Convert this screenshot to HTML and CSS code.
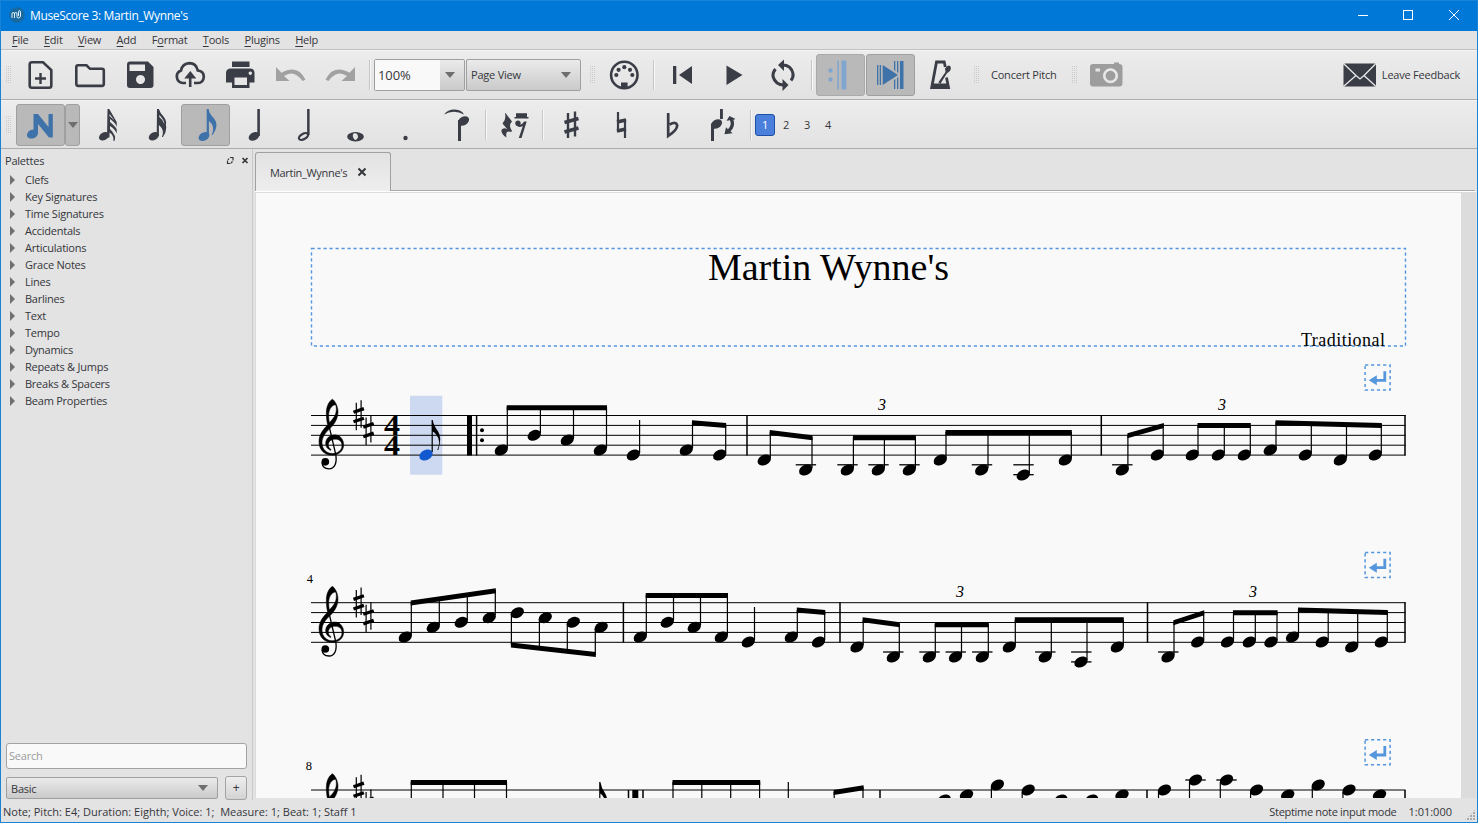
FILE: index.html
```html
<!DOCTYPE html>
<html lang="en">
<head>
<meta charset="utf-8">
<title>MuseScore 3: Martin_Wynne's</title>
<link rel="stylesheet" href="styles.css">
</head>
<body>
<div class="window">
<header class="titlebar">
<svg class="logo" width="16" height="16" viewBox="0 0 16 16"><circle cx="8" cy="8" r="7.700" fill="#17699f"/><path d="M3 11V7Q3 5.500 4.200 5.500T5.500 7V11M5.500 7Q5.500 5.500 6.800 5.500T8 7V9.500Q8 11 9.500 11T11.500 9V6Q11.500 3.500 10.500 3.500T9.500 6V9" fill="none" stroke="#fff" stroke-width=".9"/></svg>
<span class="caption">MuseScore 3: Martin_Wynne's</span>
<svg class="winbuttons" width="116" height="30" viewBox="1350 0 116 30" fill="none" stroke="#fff"><path d="M1358 15.500h10"/><rect x="1403.500" y="10.500" width="9" height="9"/><path d="M1449 10l10 10M1459 10l-10 10"/></svg>
</header>
<nav class="menubar"><span><u>F</u>ile</span><span><u>E</u>dit</span><span><u>V</u>iew</span><span><u>A</u>dd</span><span>F<u>o</u>rmat</span><span><u>T</u>ools</span><span><u>P</u>lugins</span><span><u>H</u>elp</span></nav>

<div class="toolbar">
<i class="grip first"></i>
<span class="btn"><svg width="32" height="32" viewBox="0 0 32 32"><path d="M8 3.200h11L27.300 11v15.500q0 2.200-2.200 2.200H8q-2.300 0-2.300-2.200V5.500Q5.700 3.200 8 3.200Z" fill="none" stroke="#3b3d46" stroke-width="2.600"/><path d="M16.500 14v11M11 19.500h11" stroke="#3b3d46" stroke-width="2.400"/></svg></span>
<span class="btn"><svg width="32" height="32" viewBox="0 0 32 32"><path d="M4 6.300h8.500l3.500 3.500h12q1.800 0 1.800 1.800v13.500q0 1.800-1.800 1.800H4.200q-1.900 0-1.900-1.800V8.200q0-1.900 1.700-1.900Z" fill="none" stroke="#3b3d46" stroke-width="2.600"/></svg></span>
<span class="btn"><svg width="32" height="32" viewBox="0 0 32 32"><path fill="#3b3d46" fill-rule="evenodd" d="M6 2.500h18l5.500 5.500v18q0 3-3 3H6q-3 0-3-3v-20.500q0-3 3-3ZM5.500 5.500v6.500h15.500V5.500ZM16.500 16a4.500 4.500 0 1 0 .01 0Z"/></svg></span>
<span class="btn"><svg width="32" height="32" viewBox="0 0 32 32"><path d="M12 24H8.500A6.500 6.500 0 0 1 7 11.500Q8.500 4.500 15.500 4.200Q22 4.200 23.800 11.500Q29.800 12 29.800 18Q29.300 24 24 24H20" fill="none" stroke="#3b3d46" stroke-width="2.700"/><path d="M16.300 12l6 7.500h-4.800V28h-2.600v-8.500h-4.700Z" fill="#3b3d46"/></svg></span>
<span class="btn"><svg width="32" height="32" viewBox="0 0 32 32"><path fill="#3b3d46" fill-rule="evenodd" d="M8 2.500h17.500v5.500H8ZM7 9.500h19q4.500 0 4.500 4.500v9.500h-5V29H8v-5.500H2V14q0-4.500 5-4.500ZM10.500 18.500V26H23v-7.500ZM26.300 12.500a1.700 1.700 0 1 0 .01 0Z"/></svg></span>
<span class="btn"><svg width="32" height="32" viewBox="0 0 32 32"><path d="M2 8v14h13.500L10 17Q20 10 28.500 22l3-1.200Q24 4.500 7.500 13.700Z" fill="#a1a1a1"/></svg></span>
<span class="btn"><svg width="32" height="32" viewBox="0 0 32 32"><path d="M31 8v14H17.500L23 17Q13 10 4.500 22l-3-1.200Q9 4.500 25.500 13.700Z" fill="#a1a1a1"/></svg></span>
<i class="sep w9"></i>
<div class="combo zoom"><span class="field">100%</span><i class="arrow"></i></div>
<div class="combo view"><span class="label">Page View</span><i class="arrow"></i></div>
<i class="grip midi"></i>
<span class="btn"><svg width="32" height="32" viewBox="0 0 32 32"><circle cx="16.300" cy="16" r="13.200" fill="none" stroke="#3b3d46" stroke-width="2.600"/><g fill="#3b3d46"><circle cx="8.300" cy="16" r="2.100"/><circle cx="10.600" cy="10.800" r="2.100"/><circle cx="16.300" cy="8.200" r="2.100"/><circle cx="22" cy="10.800" r="2.100"/><circle cx="24.300" cy="16" r="2.100"/><path d="M13 23.500h6.600V29H13Z"/></g></svg></span>
<i class="sep w9"></i>
<span class="btn"><svg width="32" height="32" viewBox="0 0 32 32"><path d="M6 7h3.300v18H6ZM25 7v18L12 16Z" fill="#3b3d46"/></svg></span>
<span class="btn"><svg width="32" height="32" viewBox="0 0 32 32"><path d="M9.500 6.500L25.500 16L9.500 26Z" fill="#3b3d46"/></svg></span>
<span class="btn"><svg width="32" height="32" viewBox="0 0 32 32"><g fill="none" stroke="#3b3d46" stroke-width="3"><path d="M15.500 6Q24 6 26 14.500Q26.500 18.500 24 21.500"/><path d="M17 26Q8.500 26 6 17.500Q5.500 13.500 8.500 10"/></g><path d="M17 .5V12l-6-6ZM15.500 20v12l6-6Z" fill="#3b3d46"/></svg></span>
<i class="sep w8"></i>
<span class="toggle faded"><svg width="32" height="32" viewBox="0 0 32 32" fill="#80a6cf"><circle cx="5.500" cy="11.500" r="2.200"/><circle cx="5.500" cy="20.500" r="2.200"/><path d="M12.300 1.500h1.500v29h-1.500ZM16.500 1.500h4.800v29h-4.800Z"/></svg></span>
<span class="toggle second"><svg width="32" height="32" viewBox="0 0 32 32" fill="#4072aa"><path d="M2 6h1.300v20H2ZM4.700 6H6v20H4.700ZM7.700 6L23 16 7.700 26ZM19 2h1.300v10L19 11ZM22 2h1.300v12L22 13ZM25 2h3.500v28H25ZM19 21l1.300-1v10H19ZM22 19l1.300-1v12H22Z"/></svg></span>
<span class="btn"><svg width="32" height="32" viewBox="0 0 32 32"><path fill="none" stroke="#3b3d46" stroke-width="2.800" d="M21.300 8L20.200 3H12.500L7.700 28.500H24.500L22.500 18.500"/><path fill="#3b3d46" d="M7 24.500h17.500v5H7ZM14.300 23.500L21.500 13l-.5-3.500Q24.500 5 26.500 7.500q1.500 4-3.500 6.700L16.500 24.500Z"/></svg></span>
<i class="grip cp"></i>
<span class="label concert">Concert Pitch</span>
<i class="grip cam"></i>
<span class="btn"><svg width="34" height="32" viewBox="0 0 34 32"><path fill="#9d9d9d" fill-rule="evenodd" d="M4 5h21v-1.500h5V5q3.500 0 3.500 3v16q0 3.500-3 3.500H4q-3 0-3-3V8q0-3 3-3ZM6.500 9.500v3H11v-3ZM21.500 9.200a7.500 7.500 0 1 0 .01 0ZM21.500 11.800a4.900 4.900 0 1 1-.01 0Z"/></svg></span>
<span class="feedback"><svg width="34" height="24" viewBox="0 0 34 24"><rect x=".5" y=".5" width="32.500" height="23" rx="1.500" fill="#3b3d46"/><path d="M1 1l12 11.500 4 3.500 4-3.500L32.500 1M1 23l12-10.500M32.500 23L21 12.500" fill="none" stroke="#e9e9e9" stroke-width="1.300"/></svg><span class="label">Leave Feedback</span></span>
</div>

<div class="toolbar notes">
<i class="grip second-row"></i>
<span class="toggle"><svg width="32" height="36" viewBox="0 0 32 36" fill="#4072aa"><ellipse cx="7.500" cy="27" rx="5.800" ry="4.300" transform="rotate(-25 7.500 27)"/><path d="M8.500 7H13L23.500 20V7h4.300v23.500H24L13 17v10H8.500Z"/></svg></span>
<span class="toggle drop"><i class="arrow"></i></span>
<span class="btn first-note"><svg width="32" height="36" viewBox="-.5 0 32 36" fill="#3b3d46"><ellipse cx="11.500" cy="29.300" rx="5.400" ry="3.800" transform="rotate(-30 11.500 29.300)"/><path d="M15 2h1.700l7.500 13v5q-1-4-6.700-8v3q6 5 6.700 7.500v4q-2-5-6.700-7.500v3q7 7 4.500 12h-1q.5-6-4-8.500v5h-2.500ZM17 7v2l5 4.500Z"/></svg></span>
<span class="btn w48"><svg width="32" height="36" viewBox="-.5 0 32 36" fill="#3b3d46"><ellipse cx="12.300" cy="29.300" rx="5.400" ry="3.800" transform="rotate(-30 12.300 29.300)"/><path d="M15.500 2h1.900q1 4 5 8 3 4 2 8 .8 2 0 5 0 3-3 7h-1q3-7-3-12v11h-2.200ZM17.800 10q4 3 5 7 0-4-5-9Z"/></svg></span>
<span class="toggle"><svg width="32" height="36" viewBox="0 0 32 36" fill="#4072aa"><ellipse cx="14" cy="29.500" rx="5.800" ry="4" transform="rotate(-30 14 29.500)"/><path d="M16.700 2h2q0 4 5 9 6 7-1 17h-1q4-9-2.800-14V29h-2.200Z"/></svg></span>
<span class="btn"><svg width="32" height="36" viewBox="-.5 0 32 36" fill="#3b3d46"><ellipse cx="14.500" cy="29.300" rx="5.700" ry="3.900" transform="rotate(-30 14.500 29.300)"/><path d="M17.800 2h2.600V29h-2.600Z"/></svg></span>
<span class="btn"><svg width="32" height="36" viewBox="-.5 0 32 36"><ellipse cx="14" cy="29.500" rx="5" ry="2.700" transform="rotate(-30 14 29.500)" fill="none" stroke="#3b3d46" stroke-width="2.300"/><path d="M17.600 2h2.500V28h-2.500Z" fill="#3b3d46"/></svg></span>
<span class="btn"><svg width="32" height="36" viewBox="0 0 32 36"><path fill="#3b3d46" fill-rule="evenodd" d="M16.500 25a8.300 4.700 0 1 0 .01 0ZM15 26.300q4-1 4 4.200-2 4-4 1.500-2.500-3.700 0-5.700Z"/></svg></span>
<span class="btn"><svg width="32" height="36" viewBox="0 0 32 36"><circle cx="16.500" cy="31" r="2.200" fill="#3b3d46"/></svg></span>
<span class="btn tie"><svg width="32" height="36" viewBox="0 0 32 36" fill="#3b3d46"><path d="M3 7.500Q7 2.200 14 2.500T23 7.500Q18 4.700 13 4.700T3 7.500ZM17 13h3v21h-3Z"/><ellipse cx="22.500" cy="14" rx="6" ry="4.200" transform="rotate(-30 22.500 14)"/></svg></span>
<i class="sep w7"></i>
<span class="btn"><svg width="32" height="36" viewBox="0 0 32 36" fill="#3b3d46"><path d="M7.500 6l6.500 8.500q-4 4 0 9.500l-1 1q-6-2-4.500 5.500-5.500-3.500-5-7.500 2-3 6-.5L4.500 16.500q4-4 2.500-10ZM18 6.200h11v3.800h1.500v1.500H16.500V10H18Z"/><circle cx="20" cy="16.300" r="2.700"/><path d="M18.500 17.500q5 1.500 7.500-3h2.700L23.500 31h-2.700l4-12q-4 2-6.300-.5Z"/></svg></span>
<i class="sep w7"></i>
<span class="btn"><svg width="32" height="36" viewBox="0 0 32 36"><path d="M13 6v25M20 4.500v25" stroke="#3b3d46" stroke-width="2.400"/><path d="M9.500 15.500l14-4M9.500 25l14-4" stroke="#3b3d46" stroke-width="3.800"/></svg></span>
<span class="btn"><svg width="32" height="36" viewBox="0 0 32 36"><path d="M13 5v20M20 12v19" stroke="#3b3d46" stroke-width="2.200"/><path d="M12 15l9-2M12 24l9-2" stroke="#3b3d46" stroke-width="3.800"/></svg></span>
<span class="btn w51"><svg width="32" height="36" viewBox="0 0 32 36"><path d="M12.200 6v23q9-6 9-10.500-1-4.500-7.500-1" fill="none" stroke="#3b3d46" stroke-width="2.700"/></svg></span>
<span class="btn"><svg width="32" height="36" viewBox="-.5 0 32 36" fill="#3b3d46"><ellipse cx="10" cy="17" rx="6" ry="4.200" transform="rotate(-30 10 17)"/><path d="M4.500 17h3v17h-3ZM13.500 2h2.900v10h-2.900ZM23 9l6 3-2 .8q2 7-3 11.500l2 2-8 1 1.500-7 2 2q4-4 2-9l-3.500.5Z"/></svg></span>
<i class="sep w8"></i>
<span class="voice on">1</span><span class="voice">2</span><span class="voice">3</span><span class="voice">4</span>
</div>

<main class="workspace">
<aside class="palettes">
<div class="dockhead"><span>Palettes</span><svg width="26" height="12" viewBox="0 0 26 12" fill="none" stroke="#35363b"><path d="M6 2.500H9V5.500M3.500 5.500V8.500H6.500M5 3.500L4 5M7 8L8.500 6.500" stroke-width="1.200"/><path d="M18.500 3l5 5M23.500 3l-5 5" stroke-width="1.700"/></svg></div>
<ul class="tree"><li>Clefs</li><li>Key Signatures</li><li>Time Signatures</li><li>Accidentals</li><li>Articulations</li><li>Grace Notes</li><li>Lines</li><li>Barlines</li><li>Text</li><li>Tempo</li><li>Dynamics</li><li>Repeats &amp; Jumps</li><li>Breaks &amp; Spacers</li><li>Beam Properties</li></ul>
<div class="search">Search</div>
<div class="workspace-row"><div class="combo basic"><span>Basic</span><i class="arrow"></i></div><span class="plus">+</span></div>
</aside>
<section class="document">
<div class="tabs"><div class="tab"><span>Martin_Wynne's</span><svg width="10" height="10" viewBox="0 0 10 10"><path d="M1.500 1.500l7 7M8.500 1.500l-7 7" stroke="#35363b" stroke-width="2"/></svg></div></div>
<div class="canvas">
<svg class="score" width="1205" height="605" viewBox="256 193 1205 605">
<defs>
<ellipse id="n" rx="7" ry="5" transform="rotate(-27)"/>
<g id="l"><path d="M-10.200 0H10.200" stroke="#000" stroke-width="1.300"/></g>
<g id="sharp"><path d="M-2.400-12.500V15M2.400-15V12.500" fill="none" stroke="#000" stroke-width="1.200"/><path d="M-5.200-3L5.200-6.600M-5.200 6.600L5.200 3" fill="none" stroke="#000" stroke-width="3.300"/></g>
<g id="clef" transform="scale(.33333) translate(-33 -106)"><path stroke="#000" stroke-width="1.500" fill-rule="evenodd" d="M97 57C106 62 114 80 114 94C114 116 104 130 92 143C76 158 66 170 66 188C66 208 80 220 97 220C114 220 126 210 126 196C126 182 116 177 105 177C94 177 85 184 85 194C85 201 88 205 93 208C94 209 93 211 91 210C82 206 77 199 77 190C77 176 89 164 104 164C121 164 131 179 131 194C131 213 116 225 97 225C73 225 57 209 57 184C57 162 70 148 83 134C80 124 79 110 79 98C79 80 86 64 97 57ZM105 74C94 76 86 90 86 106C86 114 87 121 88 127C99 117 109 104 109 88C109 79 108 74 105 74Z"/><path d="M85 128L107 222C112 248 104 266 87 266C75 266 67 259 66 247" fill="none" stroke="#000" stroke-width="4"/><circle cx="76" cy="245" r="11.500"/></g>
<g id="start"><path d="M0 0H1094.500M0 9.900H1094.500M0 19.800H1094.500M0 29.700H1094.500M0 39.600H1094.500" stroke="#000" stroke-width="1"/><use href="#clef"/><use href="#sharp" x="47.700" y="-.3"/><use href="#sharp" x="57.500" y="14.600"/></g>
<g id="break" fill="none" stroke="#5596dd"><rect x=".8" y=".8" width="25" height="25" stroke-width="1.500" stroke-dasharray="3.200 2.800"/><path d="M20.500 7v9H11" stroke-width="2.800"/><path d="M4.500 16l8-5v10Z" fill="#5596dd" stroke="none"/></g>
</defs>
<rect x="311.500" y="248.500" width="1094" height="97.500" fill="none" stroke="#5596dd" stroke-width="1.400" stroke-dasharray="3.200 2.800"/>
<text x="708" y="280.300" class="serif" font-size="38" textLength="241">Martin Wynne's</text>
<text x="1301" y="345.700" class="serif" font-size="18" textLength="84">Traditional</text>
<use href="#break" x="1364.300" y="364.300"/><use href="#break" x="1364.300" y="551.700"/><use href="#break" x="1364.300" y="739"/>
<rect x="410" y="395.700" width="32.300" height="79" fill="#cdd9f0"/>
<use href="#start" x="311" y="415.500"/><use href="#start" x="311" y="602.700"/><use href="#start" x="311" y="790"/>
<text class="serif meter" x="384" y="435.300" font-size="29.500" textLength="16" lengthAdjust="spacingAndGlyphs">4</text>
<text class="serif meter" x="384" y="455.100" font-size="29.500" textLength="16" lengthAdjust="spacingAndGlyphs">4</text>
<g class="serif" font-size="12.500"><text x="306.800" y="583">4</text><text x="305.800" y="770">8</text></g>
<g class="serif triplet" font-size="16"><text x="878" y="410">3</text><text x="1218" y="410">3</text><text x="956" y="597">3</text><text x="1249" y="597">3</text></g>

<use href="#n" x="426" y="455" fill="#1259d0"/>
<path d="M431.600 420h1.200q.5 5 5 11t.500 19h-1q4-9-.8-15-2-3-3.700-3.500V452h-1.200Z"/>
<path d="M467 415h5v40.500h-5Z"/>
<path class="bar" d="M476.600 415v40.500M747 415v40.500M1101.300 415v40.500M1405 415v40.500M623.400 602.300V642.500M840 602.300V642.500M1147.500 602.300V642.500M1405 602.300V642.500"/>
<circle cx="482" cy="430.300" r="2"/><circle cx="482" cy="440.300" r="2"/>

<g>
<use href="#n" x="501.300" y="450"/><use href="#n" x="534.300" y="435.300"/><use href="#n" x="567.300" y="440"/><use href="#n" x="600.300" y="450"/><use href="#n" x="633.300" y="455"/><use href="#n" x="686.300" y="450"/><use href="#n" x="719.700" y="455"/>
<use href="#n" x="764.300" y="460"/><use href="#n" x="805.700" y="470"/><use href="#n" x="847.300" y="470"/><use href="#n" x="878.300" y="470"/><use href="#n" x="909.300" y="470"/><use href="#n" x="940.300" y="460"/><use href="#n" x="981.700" y="470"/><use href="#n" x="1023.300" y="475"/><use href="#n" x="1065.300" y="460"/>
<use href="#n" x="1122.300" y="470"/><use href="#n" x="1157.300" y="455"/><use href="#n" x="1192.300" y="455"/><use href="#n" x="1218.300" y="455"/><use href="#n" x="1244.300" y="455"/><use href="#n" x="1270.300" y="450"/><use href="#n" x="1305.300" y="455"/><use href="#n" x="1340.300" y="460"/><use href="#n" x="1375.300" y="455"/>
<use href="#l" x="805.900" y="464.800"/><use href="#l" x="847.500" y="464.800"/><use href="#l" x="878.500" y="464.800"/><use href="#l" x="909.500" y="464.800"/><use href="#l" x="982" y="464.800"/><use href="#l" x="1023.500" y="464.800"/><use href="#l" x="1023.500" y="474.700"/><use href="#l" x="1122.300" y="464.800"/>
<path class="stem" d="M507.300 448V407M540.400 433V407M573.500 438V407M606.500 448V407M639.600 453V420M692.500 448V422M725.700 453V425M770.300 458V432M812 468V437M853.400 468V437M884.400 468V437M915.400 468V437M946 458V432M988 468V432M1029.300 473V432M1071.300 458V432M1127.900 468V435M1163.200 453V424M1198 453V425M1224.300 453V425M1250.300 453V425M1276 448V422M1311.300 453V422M1346.500 458V423M1381.300 453V424"/>
<path d="M506.700 405.300H607v5H506.700ZM692 420.300L726.200 423v5L692 425.300ZM769.700 430L812.500 435.300v5L769.700 435ZM853 435.300H915.900v5H853ZM945.500 430H1071.800v5H945.500ZM1127.400 433.300L1163.800 423v5L1127.400 438.300ZM1197.500 423H1250.800v5H1197.500ZM1275.500 420.300L1381.800 423v5L1275.500 425.300Z"/>
</g>
<g>
<use href="#n" x="405.300" y="637"/><use href="#n" x="433.300" y="627.300"/><use href="#n" x="461.300" y="622.300"/><use href="#n" x="489.300" y="617.700"/><use href="#n" x="517.300" y="612.700"/><use href="#n" x="545.300" y="617.700"/><use href="#n" x="573.300" y="622.300"/><use href="#n" x="601.200" y="627.300"/>
<use href="#n" x="640.300" y="637"/><use href="#n" x="667.300" y="622.300"/><use href="#n" x="694.300" y="627.300"/><use href="#n" x="721.300" y="637"/><use href="#n" x="748.300" y="642"/><use href="#n" x="791.300" y="637"/><use href="#n" x="818.500" y="642"/>
<use href="#n" x="857" y="647"/><use href="#n" x="893.300" y="657"/><use href="#n" x="929.300" y="657"/><use href="#n" x="955.500" y="657"/><use href="#n" x="982.300" y="657"/><use href="#n" x="1009.300" y="647"/><use href="#n" x="1045.200" y="657"/><use href="#n" x="1081" y="662"/><use href="#n" x="1117.300" y="647"/>
<use href="#n" x="1168" y="657"/><use href="#n" x="1197.700" y="642"/><use href="#n" x="1227.500" y="642"/><use href="#n" x="1249.300" y="642"/><use href="#n" x="1271" y="642"/><use href="#n" x="1292.500" y="637"/><use href="#n" x="1322.200" y="642"/><use href="#n" x="1351.700" y="647"/><use href="#n" x="1381.300" y="642"/>
<use href="#l" x="893.300" y="652"/><use href="#l" x="929.500" y="652"/><use href="#l" x="955.700" y="652"/><use href="#l" x="982.300" y="652"/><use href="#l" x="1045.300" y="652"/><use href="#l" x="1081.300" y="652"/><use href="#l" x="1081.300" y="661.900"/><use href="#l" x="1168.300" y="652"/>
<path class="stem" d="M411.300 635V602M439.300 625V598M467.300 620V595M495.300 615V590M511.400 614V645M539.400 619V648M567.300 624V651M595.300 629V655M646.300 635V595M673.500 620V595M700.500 625V595M727.400 635V595M754.500 640V607M797.300 635V610M824.700 640V612M863.200 645V620M899.300 655V624M935.300 655V624M961.500 655V624M988.300 655V624M1015.300 645V620M1051.300 655V620M1087 660V620M1123.300 645V620M1174 655V622M1203.700 640V612M1233.500 640V612M1255.300 640V612M1277 640V612M1298.500 635V609M1328.200 640V610M1357.700 645V610M1387.300 640V611"/>
<path d="M410.700 600.500L495.800 588.300v5L410.700 605.500ZM510.900 642.500L595.800 652v5L510.900 647.500ZM645.700 593H728v5H645.700ZM796.800 607.500L825.300 610v5L796.800 612.500ZM862.600 617.300L899.800 622.300v5L862.600 622.300ZM934.800 622.300H988.800v5H934.800ZM1014.800 617.300H1123.800v5H1014.800ZM1173.400 620.300L1204.200 610.200v5L1173.400 625.300ZM1233 610.200H1277.600v5H1233ZM1298 607.500L1387.800 610v5L1298 612.500Z"/>
</g>
<g>
<use href="#n" x="944.100" y="800"/><use href="#n" x="966.500" y="795"/><use href="#n" x="997.400" y="785"/><use href="#n" x="1028.200" y="790"/><use href="#n" x="1060.700" y="800"/><use href="#n" x="1091.500" y="800"/><use href="#n" x="1122" y="795"/><use href="#n" x="1164.400" y="790"/><use href="#n" x="1195.500" y="780"/><use href="#n" x="1226.500" y="780"/><use href="#n" x="1256.500" y="790"/><use href="#n" x="1287.700" y="795"/><use href="#n" x="1318.200" y="785"/><use href="#n" x="1349" y="790"/><use href="#n" x="1379.500" y="795"/><use href="#l" x="1195.500" y="780"/><use href="#l" x="1226.500" y="780"/>
<path class="stem" d="M411.300 782v18M443 782v18M474.500 782v18M506.500 782v18M673 782v18M701.800 782v18M730.700 782v18M759.600 782v18M788.300 782v18M834.200 792v8M863 787v13M991.400 787v13M1022.200 792v8M1158.500 792v8M1189.500 782v18M1220.300 782v18M1250.600 792v8M1312.300 787v13M1343 792v8"/>
<path class="bar" d="M628.500 790v10M643 790v10M880 790v10M1147 790v10M1405 790v10"/>
<path d="M632.300 790h6v10h-6ZM410.700 780H507v5H410.700ZM672.500 780H760.200v5H672.500ZM833.600 790L863.600 785.300v5L833.600 795ZM599.200 782h1.200q1 6 4 10 2 3 3 8h-2.500q-2-5-4.500-6.500V800h-1.200Z"/>
</g>
</svg>
</div>
</section>
</main>
<footer class="status"><span class="left">Note; Pitch: E4; Duration: Eighth; Voice: 1;&nbsp; Measure: 1; Beat: 1; Staff 1</span><span class="mode">Steptime note input mode</span><span class="pos">1:01:000</span><i class="sizegrip"></i></footer>
</div>
</body>
</html>
```
FILE: styles.css
```css
* { box-sizing: border-box; }
body { margin: 0; font: 11px/17px "Open Sans", "Noto Sans", sans-serif; letter-spacing: -.22px; color: #35363b; overflow: hidden; }
.window { width: 1478px; height: 823px; border: 1px solid #1883d7; background: #e3e3e3; display: flex; flex-direction: column; }
.titlebar { height: 30px; background: #0078d7; color: #fff; display: flex; align-items: center; padding: 0 11px 2px 8px; font-size: 12px; flex: none; }
.titlebar .caption { margin-left: 5px; letter-spacing: -.35px; }
.winbuttons { margin-left: auto; }
.menubar { height: 19px; border-bottom: 1px solid #c1c1c1; display: flex; gap: 15.400px; padding: 0 0 0 11px; flex: none; }
.menubar u { text-underline-offset: 2px; text-decoration-thickness: 1px; }
.toolbar { height: 50px; flex: none; display: flex; align-items: center; background: linear-gradient(#ececec, #e2e2e2); border-top: 1px solid #f4f4f4; border-bottom: 1px solid #acacac; }
.toolbar.notes { height: 49px; }
.btn { width: 50px; height: 42px; display: flex; align-items: center; justify-content: center; flex: none; }
.w48 { width: 48px; }
.w51 { width: 51px; }
.tie { margin-left: 2px; }
.first-note { margin-left: 3px; }
.toggle { width: 49px; height: 42px; flex: none; display: flex; align-items: center; justify-content: center; background: #b9b9b9; border: 1px solid #9f9f9f; border-radius: 3px; }
.toggle.faded { border-color: #aaa; }
.toggle.second { margin-left: 1px; }
.toggle.drop { width: 15px; }
.grip { height: 18px; width: 6px; flex: none; background: conic-gradient(#b2b2b2 25%, transparent 0) -1px 0 / 2px 2px; opacity: .55; }
.grip.first { margin: 0 3px 0 5px; }
.grip.second-row { margin: 0 4px 0 5px; }
.grip.midi { margin: 0 3px 0 9px; }
.grip.cp { margin-left: 9px; }
.grip.cam { margin: 0 3px 0 0; }
.sep { height: 30px; flex: none; background: linear-gradient(90deg, #c6c6c6 50%, #f7f7f7 50%) center / 2px 100% no-repeat; }
.w7 { width: 7px; }
.w8 { width: 8px; }
.w9 { width: 9px; }
.combo { height: 32px; border: 1px solid #9f9f9f; border-radius: 2px; background: linear-gradient(#ebebeb, #cacaca); display: flex; align-items: center; justify-content: space-between; flex: none; }
.combo.zoom { width: 91px; padding-right: 9px; }
.combo .field { width: 65px; height: 30px; line-height: 30px; background: #f9f9f9; padding-left: 3px; font-size: 13px; letter-spacing: -.1px; }
.combo.view { width: 115px; margin-left: 1px; padding: 0 9px 0 4px; }
.arrow { width: 0; height: 0; border: 5px solid transparent; border-top: 6px solid #6f6f6f; border-bottom: 0; flex: none; }
.label { white-space: nowrap; padding-bottom: 2px; }
.concert { margin-left: 11px; width: 81px; }
.feedback { margin-left: auto; margin-right: 17px; display: flex; align-items: center; gap: 5px; }
.voice { width: 21px; height: 22px; line-height: 22px; text-align: center; padding-left: 1px; }
.voice.on { width: 20px; background: #4a80dc; border: 1px solid #1c4fa5; border-radius: 3px; color: #fff; line-height: 20px; padding: 0; }
.workspace { flex: 1; min-height: 0; display: flex; }
.palettes { width: 252px; border-right: 1px solid #c9c9c9; display: flex; flex-direction: column; flex: none; }
.dockhead { display: flex; justify-content: space-between; align-items: center; height: 22px; padding: 1px 2px 0 4px; }
.tree { list-style: none; margin: 0; padding: 0; letter-spacing: -.24px; }
.tree li { height: 17px; padding-left: 9px; display: flex; align-items: center; gap: 10px; }
.tree li::before { content: ""; border: 5px solid transparent; border-left: 5px solid #707070; border-right: 0; }
.search { margin: auto 5px 0 5px; height: 26px; border: 1px solid #a3a3a3; border-radius: 3px; background: #f9f9f9; color: #9b9b9b; line-height: 24px; padding-left: 2px; flex: none; }
.workspace-row { display: flex; justify-content: space-between; padding: 7px 5px 0 5px; height: 31px; flex: none; }
.combo.basic { width: 212px; height: 22px; margin-top: 1px; padding: 0 9px 0 4px; }
.plus { width: 22px; height: 24px; border: 1px solid #a3a3a3; border-radius: 3px; background: linear-gradient(#eee, #d3d3d3); text-align: center; line-height: 22px; font-size: 12px; }
.document { flex: 1; display: flex; flex-direction: column; padding-left: 2px; min-width: 0; }
.tabs { height: 42px; padding-top: 3px; border-bottom: 1px solid #a9a9a9; flex: none; width: 1220px; }
.tab { width: 136px; height: 39px; border: 1px solid #a0a0a0; border-bottom: 0; border-radius: 3px 3px 0 0; background: linear-gradient(#e2e2e2, #eee); display: flex; align-items: center; gap: 10px; padding-left: 14px; letter-spacing: -.32px; }
.canvas { width: 1221px; padding: 1px 0 0 1px; background: #dcdcdc; height: 607px; flex: none; border-top: 1px solid #fff; overflow: hidden; }
.score { display: block; background: #f9f9f9; }
.serif { font-family: "Liberation Serif", serif; fill: #000; letter-spacing: 0; }
.meter { font-weight: bold; }
.triplet { font-style: italic; }
.stem { stroke: #000; stroke-width: 1.2; fill: none; }
.bar { stroke: #000; stroke-width: 1.5; fill: none; }
.status { height: 22px; flex: none; display: flex; align-items: center; padding: 0 0 0 2px; letter-spacing: 0; }
.mode { margin-left: auto; letter-spacing: -.31px; }
.pos { margin-left: 12px; }
.sizegrip { width: 12px; height: 12px; margin: 8px 1px 0 12px; background: radial-gradient(circle at 1px 1px, #aaa .8px, transparent 1px) 0 0 / 3px 3px; clip-path: polygon(100% 0, 100% 100%, 0 100%); }
```
